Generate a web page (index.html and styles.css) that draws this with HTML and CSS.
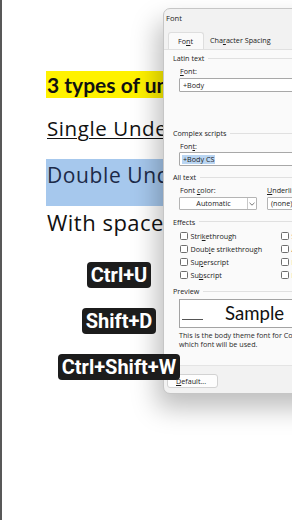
FILE: index.html
```html
<!DOCTYPE html>
<html lang="en">
<head>
<meta charset="utf-8">
<title>Font dialog</title>
<link rel="stylesheet" href="styles.css">
</head>
<body>
<div class="page">
  <div class="edge"></div>
  <main class="doc">
    <div class="line l1"><span class="hl-yellow">3 types of underlines</span></div>
    <div class="line l2"><span class="single">Single Underline</span></div>
    <div class="line l3">Double Underline</div>
    <div class="line l4">With spaces</div>
    <div class="keys">
      <span class="key">Ctrl+U</span>
      <span class="key">Shift+D</span>
      <span class="key">Ctrl+Shift+W</span>
    </div>
  </main>

  <section class="dialog">
    <div class="title">Font</div>
    <div class="tabs">
      <div class="tab active">Fo<u>n</u>t</div>
      <div class="tab">Cha<u>r</u>acter Spacing</div>
    </div>
    <div class="panel">
      <div class="group g-latin">Latin text</div>
      <div class="field-label lbl1"><u>F</u>ont:</div>
      <div class="input">+Body</div>

      <div class="group g-complex">Complex scripts</div>
      <div class="field-label lbl2">Fon<u>t</u>:</div>
      <div class="input"><span class="sel">+Body CS</span></div>

      <div class="group g-all">All text</div>
      <div class="cols labels">
        <div class="col-left">Font <u>c</u>olor:</div>
        <div class="col-right"><u>U</u>nderline style:</div>
      </div>
      <div class="cols fields">
        <div class="col-left select">
          <span class="select-text">Automatic</span>
          <span class="chev"><svg width="6" height="4" viewBox="0 0 6 4"><path d="M0.5 0.8 L3 3.2 L5.5 0.8" fill="none" stroke="#555" stroke-width="0.8"/></svg></span>
        </div>
        <div class="col-right select none">(none)</div>
      </div>

      <div class="group g-effects">Effects</div>
      <div class="checks">
        <div class="check"><span class="box"></span>Stri<u>k</u>ethrough</div>
        <div class="check"><span class="box"></span>Small caps</div>
        <div class="check"><span class="box"></span>Doub<u>l</u>e strikethrough</div>
        <div class="check"><span class="box"></span>All caps</div>
        <div class="check"><span class="box"></span>Su<u>p</u>erscript</div>
        <div class="check"><span class="box"></span>Hidden</div>
        <div class="check"><span class="box"></span>Su<u>b</u>script</div>
        <div class="check"><span class="box"></span>Bold</div>
      </div>

      <div class="group g-preview">Preview</div>
      <div class="preview">
        <span class="base"></span>
        <span class="sample">Sample</span>
      </div>
      <p class="desc">This is the body theme font for Complex Scripts. The current document theme defines<br>which font will be used.</p>
    </div>
    <div class="footer">
      <button class="btn"><u>D</u>efault...</button>
    </div>
  </section>
</div>
</body>
</html>
```

FILE: styles.css
```css
* { box-sizing: border-box; }

html, body {
  margin: 0;
  padding: 0;
  background: #ffffff;
}

.page {
  position: relative;
  width: 292px;
  height: 520px;
  overflow: hidden;
  display: flex;
  background: #ffffff;
}

.edge {
  width: 2px;
  flex: none;
  background: #585858;
}

.doc {
  flex: 1;
  padding: 71px 0 0 45px;
  font-family: "Open Sans", Lato, sans-serif;
  color: #111111;
  white-space: nowrap;
}

.line {
  display: block;
}

.l1 {
  height: 27px;
  line-height: 27px;
  font-family: Lato, "Open Sans", sans-serif;
  font-size: 21px;
  font-weight: 700;
}

.hl-yellow {
  display: inline-block;
  height: 27px;
  margin-left: -1px;
  padding: 0 1px;
  background: #fff200;
}

.l2 {
  margin-top: 16px;
  height: 28px;
  line-height: 28px;
  font-size: 20.5px;
  letter-spacing: 0.6px;
}

.single {
  text-decoration: underline;
  text-decoration-thickness: 1px;
  text-underline-offset: 2px;
}

.l3 {
  margin-top: 17px;
  margin-left: -1px;
  padding: 2px 0 17px 1px;
  width: 220px;
  line-height: 28px;
  font-size: 21px;
  letter-spacing: 0.6px;
  color: #1c2a48;
  background: #a6c8ed;
}

.l4 {
  margin-top: 2px;
  height: 28px;
  line-height: 28px;
  font-size: 22px;
  letter-spacing: 0.5px;
}

.keys {
  position: relative;
  z-index: 2;
  width: 144px;
  margin-top: 26px;
  display: flex;
  flex-direction: column;
  align-items: center;
  gap: 20px;
}

.key {
  display: block;
  height: 26px;
  line-height: 26px;
  padding: 0 4px;
  border-radius: 4px;
  background: #1c1c1c;
  color: #ffffff;
  font-family: Roboto, "Liberation Sans", sans-serif;
  font-weight: 700;
  font-size: 20px;
  letter-spacing: 0;
}

/* ---------- dialog ---------- */

.dialog {
  position: absolute;
  z-index: 1;
  left: 163px;
  top: 8px;
  width: 200px;
  height: 386px;
  display: flex;
  flex-direction: column;
  background: #f2f2f2;
  border: 1px solid #c6c6c6;
  border-radius: 7px;
  box-shadow: -6px 14px 26px rgba(0, 0, 0, 0.26);
  font-family: "Open Sans", "Noto Sans", sans-serif;
  font-size: 7.2px;
  color: #1b1b1b;
  white-space: nowrap;
}

.title {
  height: 19px;
  line-height: 19px;
  padding-left: 2px;
  font-size: 7.6px;
}

.tabs {
  display: flex;
  margin-top: 3.5px;
  padding-left: 4px;
  height: 17px;
}

.tab {
  height: 17px;
  line-height: 17px;
  padding: 0 6px;
}

.tab.active {
  width: 36px;
  padding-left: 9px;
  background: #fafafa;
  border: 1px solid #dedede;
  border-bottom: none;
  border-radius: 3px 3px 0 0;
  line-height: 16px;
}

.panel {
  height: 317px;
  padding-left: 9px;
  background: #fafafa;
  border-top: 1px solid #e0e0e0;
  border-bottom: 1px solid #e4e4e4;
}

.group {
  display: flex;
  align-items: center;
  height: 14px;
  color: #222222;
}

.group::after {
  content: "";
  flex: 1;
  height: 1px;
  margin-left: 4px;
  background: #e0e0e0;
}

.g-latin { margin-top: 1.5px; }
.g-complex { margin-top: 34px; }
.g-all { margin-top: 4px; }
.g-effects { margin-top: 4px; height: 15px; }
.g-preview { margin-top: 3px; }

.field-label {
  padding-left: 7px;
  height: 13px;
  line-height: 13px;
}

.lbl2 { height: 12px; line-height: 12px; }

.input {
  margin-left: 6px;
  height: 14px;
  line-height: 12px;
  padding-left: 3px;
  background: #ffffff;
  border: 1px solid #a8a8a8;
  border-radius: 1px;
}

.sel {
  display: inline-block;
  line-height: 9px;
  padding: 0 1px;
  margin-left: -1px;
  background: #b9d5f2;
}

.cols {
  display: flex;
  gap: 10px;
  padding-left: 6px;
}

.cols.labels {
  height: 13px;
  line-height: 13px;
}

.cols.labels .col-left { padding-left: 1px; }

.col-left {
  width: 78px;
  flex: none;
}

.cols.fields {
  height: 13px;
}

.select {
  display: flex;
  height: 13px;
  background: #ffffff;
  border: 1px solid #b4b4b4;
  border-radius: 1px;
}

.select-text {
  flex: 1;
  text-align: center;
  line-height: 11px;
}

.chev {
  width: 9px;
  display: flex;
  align-items: center;
  justify-content: center;
  border-left: 1px solid #c8c8c8;
}

.select.none {
  width: 60px;
  padding-left: 3px;
  line-height: 11px;
}

.checks {
  display: grid;
  grid-template-columns: 101px auto;
  padding-left: 7px;
}

.check {
  display: flex;
  align-items: center;
  height: 13px;
}

.box {
  width: 8px;
  height: 8px;
  margin-right: 2.5px;
  background: #ffffff;
  border: 1px solid #6e6e6e;
  border-radius: 1.5px;
}

.preview {
  display: flex;
  align-items: baseline;
  margin: 1px 0 0 6px;
  height: 29px;
  padding-left: 2px;
  background: #ffffff;
  border: 1px solid #a3a3a3;
}

.base {
  width: 21px;
  height: 1px;
  background: #555555;
}

.sample {
  margin-left: 22px;
  font-family: Lato, "Open Sans", sans-serif;
  font-size: 18.6px;
  line-height: 27px;
  color: #111111;
}

.desc {
  margin: 3px 0 0 6px;
  line-height: 9px;
  color: #2a2a2a;
}

.footer {
  padding: 8px 0 0 3px;
}

.btn {
  display: block;
  width: 51px;
  height: 14.5px;
  padding: 0 0 0 8px;
  text-align: left;
  font-family: "Open Sans", "Noto Sans", sans-serif;
  font-size: 7.2px;
  line-height: 12px;
  color: #1b1b1b;
  background: #fdfdfd;
  border: 1px solid #d2d2d2;
  border-radius: 3px;
}
```
